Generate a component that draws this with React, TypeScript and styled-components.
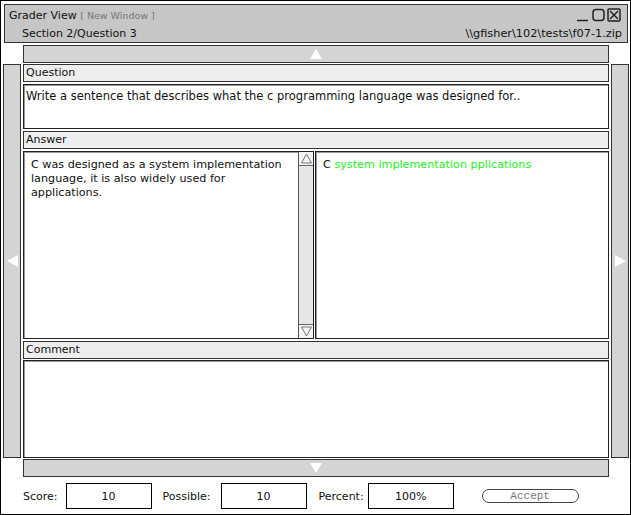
import React from "react";
import styled, { createGlobalStyle } from "styled-components";

const GlobalStyle = createGlobalStyle`
  html, body {
    margin: 0;
    padding: 0;
    background: #fff;
  }
  body {
    font-family: "DejaVu Sans", "Liberation Sans", sans-serif;
    font-size: 11px;
    color: #111;
  }
`;

const Arrow = ({ dir }: { dir: "up" | "down" | "left" | "right" }) => {
  const pts = {
    up: "6,0 12,10 0,10",
    down: "0,0 12,0 6,10",
    left: "11,0 11,12 0,6",
    right: "0,0 11,6 0,12",
  }[dir];
  const vertical = dir === "up" || dir === "down";
  return (
    <svg width={vertical ? 12 : 11} height={vertical ? 10 : 12}>
      <polygon points={pts} fill="#fff" />
    </svg>
  );
};

const ScrollArrow = ({ dir }: { dir: "up" | "down" }) => (
  <svg width="13" height="13" viewBox="0 0 13 13">
    <polygon
      points={dir === "up" ? "6.5,2 11.5,11 1.5,11" : "1.5,2 11.5,2 6.5,11"}
      fill="none"
      stroke="#777"
      strokeWidth="1"
    />
  </svg>
);

const App = () => {
  return (
    <>
      <GlobalStyle />
      <Window>
        <TitleBar>
          <TitleRow>
            <Title>
              Grader View <Sub>[ New Window ]</Sub>
            </Title>
            <Controls>
              <svg width="44" height="14" viewBox="0 0 44 14">
                <line x1="0" y1="12.5" x2="11" y2="12.5" stroke="#222" strokeWidth="1.5" />
                <rect x="16" y="1.5" width="11" height="11" rx="3" fill="none" stroke="#222" strokeWidth="1.5" />
                <rect x="31" y="1" width="12" height="12" rx="1" fill="none" stroke="#222" strokeWidth="1.5" />
                <line x1="33" y1="3" x2="41" y2="11" stroke="#222" strokeWidth="1.5" />
                <line x1="41" y1="3" x2="33" y2="11" stroke="#222" strokeWidth="1.5" />
              </svg>
            </Controls>
          </TitleRow>
          <TitleRow>
            <Section>Section 2/Question 3</Section>
            <Path>{"\\\\gfisher\\102\\tests\\f07-1.zip"}</Path>
          </TitleRow>
        </TitleBar>

        <Body>
          <HBar $area="top">
            <Arrow dir="up" />
          </HBar>
          <VBar $area="left">
            <Arrow dir="left" />
          </VBar>
          <Center>
            <Header>Question</Header>
            <TextBox $height={45} $size={11.5}>
              Write a sentence that describes what the c programming language was designed for..
            </TextBox>
            <Header>Answer</Header>
            <Panels>
              <AnswerPane>
                <AnswerText>
                  C was designed as a system implementation language, it is also widely used for
                  applications.
                </AnswerText>
                <Scrollbar>
                  <ScrollButton>
                    <ScrollArrow dir="up" />
                  </ScrollButton>
                  <Track />
                  <ScrollButton>
                    <ScrollArrow dir="down" />
                  </ScrollButton>
                </Scrollbar>
              </AnswerPane>
              <TextBox $height={188} $size={11.2}>
                C <Match>system implementation pplications</Match>
              </TextBox>
            </Panels>
            <Header>Comment</Header>
            <TextBox $height={98} />
          </Center>
          <VBar $area="right">
            <Arrow dir="right" />
          </VBar>
          <HBar $area="bottom">
            <Arrow dir="down" />
          </HBar>
        </Body>

        <Footer>
          <Label $mr={8}>Score:</Label>
          <Field>10</Field>
          <Label $ml={11} $mr={10}>Possible:</Label>
          <Field>10</Field>
          <Label $ml={12} $mr={4}>Percent:</Label>
          <Field>100%</Field>
          <AcceptButton>Accept</AcceptButton>
        </Footer>
      </Window>
    </>
  );
};

const Window = styled.div`
  width: 631px;
  height: 515px;
  box-sizing: border-box;
  border: 1px solid #000;
  padding: 3px 1px 0 2px;
  display: flex;
  flex-direction: column;
`;

const TitleBar = styled.div`
  margin-left: 1px;
  margin-right: 1px;
  height: 39px;
  box-sizing: border-box;
  background: #c6c6c6;
  border: 1px solid #333;
  padding: 1px 5px 0 4px;
  display: flex;
  flex-direction: column;
`;

const TitleRow = styled.div`
  display: flex;
  justify-content: space-between;
  align-items: center;
  height: 18px;
`;

const Title = styled.span`
  font-size: 11px;
`;

const Sub = styled.span`
  font-size: 9.5px;
  color: #777;
`;

const Section = styled.span`
  padding-left: 13px;
`;

const Path = styled.span`
  font-size: 11.3px;
`;

const Controls = styled.div`
  display: flex;
  align-items: center;
  margin-right: 1px;
`;

const Body = styled.div`
  margin-top: 2px;
  display: grid;
  grid-template-columns: 18px 1fr 18px;
  grid-template-rows: 18px 394px 18px;
  grid-template-areas:
    ". top ."
    "left center right"
    ". bottom .";
  column-gap: 2px;
  row-gap: 1px;
`;

const HBar = styled.div<{ $area: string }>`
  grid-area: ${(p) => p.$area};
  box-sizing: border-box;
  background: #d4d4d4;
  border: 1px solid #333;
  display: flex;
  align-items: center;
  justify-content: center;
`;

const VBar = styled.div<{ $area: string }>`
  grid-area: ${(p) => p.$area};
  box-sizing: border-box;
  background: #d4d4d4;
  border: 1px solid #333;
  display: flex;
  align-items: center;
  justify-content: center;
`;

const Center = styled.div`
  grid-area: center;
  display: grid;
  grid-template-rows: 18px 45px 18px 188px 18px 98px;
  row-gap: 2px;
  & > :last-child {
    margin-top: -1px;
  }
`;

const Header = styled.div`
  box-sizing: border-box;
  background: #eeeeee;
  border: 1px solid #333;
  padding: 0 2px;
  line-height: 16px;
`;

const TextBox = styled.div<{ $height?: number; $size?: number }>`
  box-sizing: border-box;
  height: ${(p) => p.$height ?? 45}px;
  font-size: ${(p) => p.$size ?? 11}px;
  background: #fff;
  border: 1px solid #222;
  box-shadow: inset 1px 1px 0 #999;
  padding: 4px 2px;
  line-height: 14px;
`;

const Panels = styled.div`
  display: grid;
  grid-template-columns: 291px 1fr;
  column-gap: 1px;
  & > ${TextBox} {
    padding: 6px 7px;
  }
`;

const AnswerPane = styled.div`
  box-sizing: border-box;
  display: flex;
  border: 1px solid #222;
  box-shadow: inset 1px 1px 0 #999;
  background: #fff;
`;

const AnswerText = styled.div`
  flex: 1;
  padding: 6px 7px;
  font-size: 11.2px;
  line-height: 14px;
`;

const Scrollbar = styled.div`
  width: 14px;
  display: flex;
  flex-direction: column;
  border-left: 1px solid #555;
  background: #e6e6e6;
`;

const ScrollButton = styled.div`
  height: 14px;
  box-sizing: border-box;
  background: #f4f4f4;
  border-bottom: 1px solid #666;
  display: flex;
  align-items: center;
  justify-content: center;
  &:last-child {
    border-bottom: none;
    border-top: 1px solid #666;
  }
`;

const Track = styled.div`
  flex: 1;
  background: #e6e6e6;
`;

const Match = styled.span`
  color: #22f022;
`;

const Footer = styled.div`
  margin-top: 6px;
  display: flex;
  align-items: center;
  padding-left: 20px;
`;

const Label = styled.span<{ $ml?: number; $mr?: number }>`
  margin-left: ${(p) => p.$ml ?? 0}px;
  margin-right: ${(p) => p.$mr ?? 9}px;
`;

const Field = styled.div`
  width: 86px;
  height: 26px;
  box-sizing: border-box;
  border: 1px solid #000;
  display: flex;
  align-items: center;
  justify-content: center;
`;

const AcceptButton = styled.button`
  margin-left: 28px;
  width: 97px;
  height: 14px;
  box-sizing: border-box;
  border: 1px solid #444;
  border-radius: 7px;
  background: #fff;
  padding: 0;
  font-family: "Liberation Mono", "DejaVu Sans Mono", monospace;
  font-size: 11px;
  line-height: 12px;
  color: #777;
`;

export default App;
